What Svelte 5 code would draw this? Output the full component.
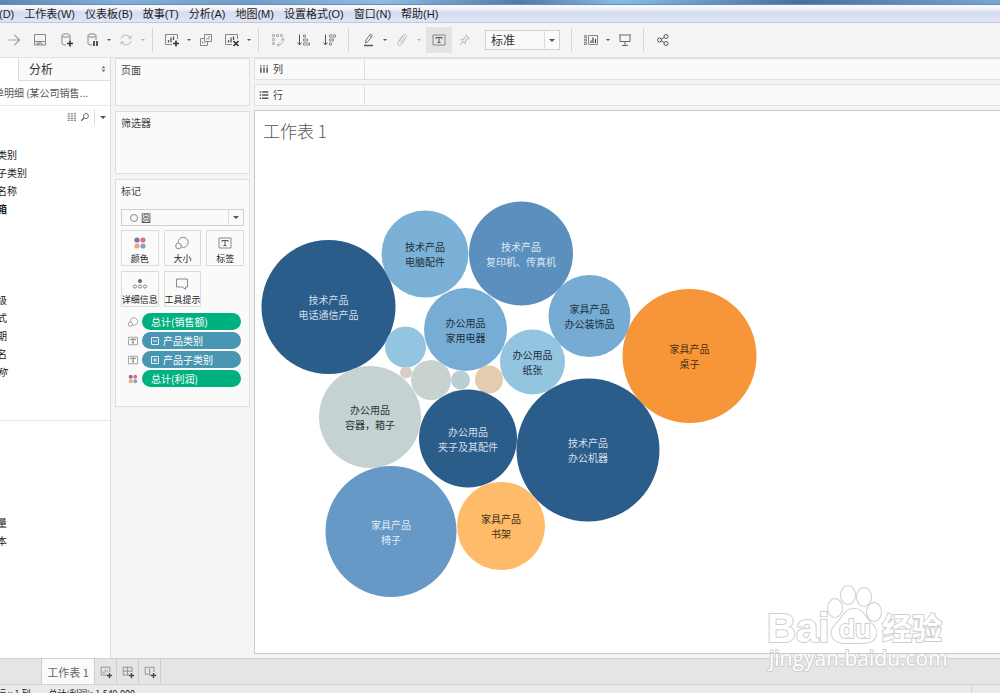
<script lang="ts">
  const menus = [
    '(D)', '工作表(W)', '仪表板(B)', '故事(T)', '分析(A)',
    '地图(M)', '设置格式(O)', '窗口(N)', '帮助(H)'
  ];

  const tools = [
    'forward', 'save', 'data-add', 'data-pause', 'caret', 'refresh', 'caret-dim', 'sep',
    'sheet-add', 'caret', 'duplicate', 'sheet-clear', 'caret', 'sep',
    'swap', 'sort-asc', 'sort-desc', 'sep',
    'pen', 'caret', 'clip', 'caret-dim'
  ];

  const fieldGroups = [
    ['类别', '子类别', '名称', '箱'],
    ['级', '式', '期', '名', '称'],
    ['量', '本']
  ];

  const markButtons = [
    { icon: 'color', label: '颜色' },
    { icon: 'size', label: '大小' },
    { icon: 'text', label: '标签' },
    { icon: 'detail', label: '详细信息' },
    { icon: 'tooltip', label: '工具提示' }
  ];

  const pills = [
    { icon: 'size', label: '总计(销售额)', kind: 'measure', sign: '' },
    { icon: 'text', label: '产品类别', kind: 'dimension', sign: 'minus' },
    { icon: 'text', label: '产品子类别', kind: 'dimension', sign: 'plus' },
    { icon: 'color', label: '总计(利润)', kind: 'measure', sign: '' }
  ];

  const bubbles = [
    { x: 328.5, y: 307, r: 67, fill: '#2b5d8b', ink: '#d3deea', lines: ['技术产品', '电话通信产品'] },
    { x: 425, y: 254, r: 43.5, fill: '#7bb1d7', ink: '#20303c', lines: ['技术产品', '电脑配件'] },
    { x: 521, y: 253.5, r: 52, fill: '#5b8fbe', ink: '#dfe9f3', lines: ['技术产品', '复印机、传真机'] },
    { x: 465.5, y: 329.5, r: 41.5, fill: '#77add5', ink: '#20303c', lines: ['办公用品', '家用电器'] },
    { x: 589.5, y: 316, r: 41, fill: '#76abd3', ink: '#20303c', lines: ['家具产品', '办公装饰品'] },
    { x: 689.5, y: 356, r: 67, fill: '#f79539', ink: '#4a2c10', lines: ['家具产品', '桌子'] },
    { x: 405.5, y: 347, r: 20.5, fill: '#93c4e0', ink: '', lines: [] },
    { x: 406, y: 372.5, r: 6, fill: '#d8cfc4', ink: '', lines: [] },
    { x: 431, y: 380, r: 20, fill: '#c8d2ce', ink: '', lines: [] },
    { x: 460.5, y: 380, r: 9.5, fill: '#bacfd4', ink: '', lines: [] },
    { x: 489, y: 379.5, r: 14, fill: '#e4ccae', ink: '', lines: [] },
    { x: 532.5, y: 362, r: 32.5, fill: '#93c4e0', ink: '#20303c', lines: ['办公用品', '纸张'] },
    { x: 370, y: 417, r: 51, fill: '#c4d2d1', ink: '#2b3434', lines: ['办公用品', '容器，箱子'] },
    { x: 468, y: 438.5, r: 49, fill: '#2b5d8b', ink: '#d3deea', lines: ['办公用品', '夹子及其配件'] },
    { x: 588, y: 450, r: 71.5, fill: '#2b5d8b', ink: '#d3deea', lines: ['技术产品', '办公机器'] },
    { x: 391, y: 531.5, r: 65.5, fill: '#6699c6', ink: '#e2ebf4', lines: ['家具产品', '椅子'] },
    { x: 501, y: 526, r: 44, fill: '#febb69', ink: '#3d2f18', lines: ['家具产品', '书架'] }
  ];

  let size = $state('标准');
  let mark = $state('圆');
</script>

{#snippet icon(name: string)}
  <svg class="icon" viewBox="0 0 16 16" aria-hidden="true">
    {#if name === 'forward'}
      <path d="M2.500 8h11M8.500 3 13.500 8l-5 5" stroke="#a0a0a0" stroke-width="1.200" />
    {:else if name === 'save'}
      <path d="M2.500 2.500h11v10.500h-11zM2.500 9.500h11M5 13v-2h5v2M7 11v2" />
    {:else if name === 'data-add' || name === 'data-pause'}
      <path d="M4 3.500v8c0 1 1.500 1.500 4 1.500M12 3.500V8" />
      <ellipse cx="8" cy="3.500" rx="4" ry="1.700" />
      {#if name === 'data-add'}
        <path d="M12 8.500v6M9 11.500h6" stroke="#333" stroke-width="1.600" />
      {:else}
        <path d="M10 9v5M13 9v5" stroke="#444" stroke-width="1.800" />
      {/if}
    {:else if name === 'refresh'}
      <path d="M3 7a5 5 0 0 1 9.500-1M13 9a5 5 0 0 1-9.500 1M13.500 3.500 12.500 6.500 10 5.500M2.500 12.500 3.500 9.500 6 10.500" stroke="#b8b8b8" />
    {:else if name === 'sheet-add' || name === 'sheet-clear'}
      <path d="M8 12.500H1.500v-10h12V7" />
      <path d="M4.500 10.500V8M7 10.500v-5M9.500 8V4.500" stroke="#555" stroke-width="1.300" />
      {#if name === 'sheet-add'}
        <path d="M12 8.500v6M9 11.500h6" stroke="#333" stroke-width="1.600" />
      {:else}
        <path d="m9.500 9 5 5M14.500 9l-5 5" stroke="#333" stroke-width="1.600" />
      {/if}
    {:else if name === 'duplicate'}
      <path d="M6.500 2.500h7v7h-7zM6.500 6.500h-4v7h7v-4M4.500 11.500V9.500M6.500 11.500v-1M9 7.500V6M11 7.500V4" />
    {:else if name === 'swap'}
      <path d="M2.500 2.500h2v2h-2zM6.500 2.500h2v2h-2zM10.500 2.500h2v2h-2zM2.500 6.500h2v2h-2zM2.500 10.500h2v2h-2zM8 13c3 0 5-2 5-6M11 8.500 13 6l1.500 2.500M9.500 11 7 13l2.500 1.500" stroke="#b0b0b0" />
    {:else if name === 'sort-asc'}
      <path d="M3.500 2.500v10M1.500 10.500l2 2.500 2-2.500" stroke="#555" />
      <path d="M7.500 3h2v2h-2zM7.500 7h4v2h-4zM7.500 11h6v2h-6z" />
    {:else if name === 'sort-desc'}
      <path d="M3.500 2.500v10M1.500 10.500l2 2.500 2-2.500" stroke="#555" />
      <path d="M7.500 3h6v2h-6zM7.500 7h4v2h-4zM7.500 11h2v2h-2z" />
    {:else if name === 'pen'}
      <path d="m5.500 11 .500-3 4.500-6 2 1.500-4.500 6zM9.500 3.500l2 1.500" stroke="#777" />
      <path d="M4 13.500h9" stroke="#555" stroke-width="1.500" />
    {:else if name === 'clip'}
      <path d="m5 9.500 4-6c1.500-2 4.500-.500 3 2l-4.500 7c-2 2.500-5 .500-3.500-2l3.500-5.500c1-1.500 3 0 2 1.500l-3 4.500" stroke="#b8b8b8" />
    {:else if name === 'text'}
      <path d="M2 3h12v10H2z" />
      <path d="M5 7V5.500h6V7M8 5.500v5M6.500 10.500h3" stroke="#555" />
    {:else if name === 'pin'}
      <path d="m8.500 2.500 4 4M9.500 3.500 7 7l-3 .500L8 11.500l.500-3 3.500-2.500M6 9.500 3 13" stroke="#b0b0b0" />
    {:else if name === 'show-me'}
      <path d="M5.500 3.500h9v9h-9zM1.500 3.500h2v2h-2zM1.500 7h2v2h-2zM1.500 10.500h2v2h-2z" />
      <path d="M8 11V8.500M10 11V5.500M12.500 11V7" stroke="#444" stroke-width="1.200" />
    {:else if name === 'present'}
      <path d="M2 3h12M3 3v6.500h10V3M8 9.500v4M5 13.500h6" stroke="#666" />
    {:else if name === 'share'}
      <circle cx="4.500" cy="8" r="2" stroke="#555" />
      <circle cx="11" cy="4.500" r="2" stroke="#555" />
      <circle cx="11" cy="11.500" r="2" stroke="#555" />
      <path d="m6.300 7 3-1.500M6.300 9l3 1.500" stroke="#555" />
    {:else if name === 'color'}
      <g stroke="none">
        <circle cx="5" cy="5" r="2.600" fill="#8a6d9e" />
        <circle cx="11" cy="5" r="2.600" fill="#f3677c" />
        <circle cx="5" cy="11" r="2.600" fill="#f5a574" />
        <circle cx="11" cy="11" r="2.600" fill="#7da5cf" />
      </g>
    {:else if name === 'size'}
      <circle cx="4.500" cy="11" r="2.800" />
      <path d="M4.200 7.500a5 5 0 1 1 3.500 4.600" />
    {:else if name === 'detail'}
      <circle cx="8" cy="5" r="2" fill="#666" stroke="none" />
      <circle cx="3" cy="10.500" r="1.600" />
      <circle cx="8" cy="10.500" r="1.600" />
      <circle cx="13" cy="10.500" r="1.600" />
    {:else if name === 'tooltip'}
      <path d="M2.500 3h11v8h-2v2.500L8.500 11h-6z" />
    {:else if name === 'columns'}
      <path d="M3 2v2M3 5.500V14M8 2v2M8 5.500V14M13 2v2M13 5.500V14" stroke="#555" stroke-width="2.400" />
    {:else if name === 'rows'}
      <path d="M1 3h2.500M5 3h10M1 8h2.500M5 8h10M1 13h2.500M5 13h10" stroke="#555" stroke-width="2.400" />
    {:else if name === 'grid'}
      <path d="M1 3h3.500M6 3h3.500M11 3h3.500M1 6.500h3.500M6 6.500h3.500M11 6.500h3.500M1 10h3.500M6 10h3.500M11 10h3.500M1 13.500h3.500M6 13.500h3.500M11 13.500h3.500" stroke-width="2" />
    {:else if name === 'search'}
      <circle cx="9.500" cy="6.500" r="4" stroke="#666" stroke-width="1.500" />
      <path d="m6.500 9.500-4.500 4.500" stroke="#666" stroke-width="2" />
    {:else if name === 'new-sheet'}
      <path d="M9 11.500H2.500v-9h10V8M5 9.500V7.500M7 9.500V5M9.500 8V6" />
      <path d="M12 9v6M9 12h6" stroke="#444" stroke-width="1.500" />
    {:else if name === 'new-dashboard'}
      <path d="M9 11.500H2.500v-9h10V8M7.500 2.500v9M2.500 7h10" />
      <path d="M12 9v6M9 12h6" stroke="#444" stroke-width="1.500" />
    {:else if name === 'new-story'}
      <path d="M9 11.500H7.500l-1-1h-4v-8h4l1 1 1-1h4V8M7.500 3.500v8" />
      <path d="M12 9v6M9 12h6" stroke="#444" stroke-width="1.500" />
    {/if}
  </svg>
{/snippet}

<div class="app">
  <div class="titlebar"></div>
  <nav class="menubar">
    {#each menus as menu}
      <button>{menu}</button>
    {/each}
  </nav>

  <div class="toolbar">
    {#each tools as tool}
      {#if tool === 'sep'}
        <span class="sep"></span>
      {:else if tool.startsWith('caret')}
        <button class="drop" class:dim={tool === 'caret-dim'} aria-label="more"><i class="caret"></i></button>
      {:else}
        <button class="tool" aria-label={tool}>{@render icon(tool)}</button>
      {/if}
    {/each}
    <button class="tool pressed" aria-label="labels">{@render icon('text')}</button>
    <button class="tool" aria-label="pin">{@render icon('pin')}</button>
    <span class="select fit">
      <select bind:value={size} aria-label="fit">
        <option>标准</option>
      </select>
      <i class="caret"></i>
    </span>
    <span class="sep"></span>
    <button class="tool" aria-label="show me">{@render icon('show-me')}</button>
    <button class="drop" aria-label="more"><i class="caret"></i></button>
    <button class="tool" aria-label="present">{@render icon('present')}</button>
    <span class="sep"></span>
    <button class="tool" aria-label="share">{@render icon('share')}</button>
  </div>

  <main>
    <aside class="data">
      <div class="tabs">
        <button class="analysis">
          分析
          <svg class="spin" viewBox="0 0 6 8" aria-hidden="true"><path d="M3 0 5.500 3h-5zM3 8 .500 5h5z" /></svg>
        </button>
      </div>
      <div class="source">单明细 (某公司销售...</div>
      <div class="fieldTools">
        <button aria-label="view">{@render icon('grid')}</button>
        <button aria-label="find">{@render icon('search')}</button>
        <button class="fieldMenu" aria-label="menu"><i class="caret"></i></button>
      </div>
      {#each fieldGroups as group}
        <ul>
          {#each group as field}
            <li class:bold={field === '箱'} class:italic={field === '称'}>{field}</li>
          {/each}
        </ul>
      {/each}
    </aside>

    <section class="cards">
      <div class="card pages"><h2>页面</h2></div>
      <div class="card filters"><h2>筛选器</h2></div>
      <div class="card marks">
        <h2>标记</h2>
        <span class="select markType">
          <svg class="ring" viewBox="0 0 10 10" aria-hidden="true"><circle cx="5" cy="5" r="3.500" /></svg>
          <select bind:value={mark} aria-label="mark">
            <option>圆</option>
          </select>
          <i class="caret"></i>
        </span>
        <div class="markGrid">
          {#each markButtons as item}
            <button>{@render icon(item.icon)}<span>{item.label}</span></button>
          {/each}
        </div>
        <div class="pills">
          {#each pills as pill}
            <div class="pillRow">
              {@render icon(pill.icon)}
              <button class={pill.kind}>
                {#if pill.sign}
                  <svg class="sign" viewBox="0 0 8 8" aria-hidden="true">
                    <path d={pill.sign === 'plus' ? 'M.5.5h7v7h-7zM2 4h4M4 2v4' : 'M.5.5h7v7h-7zM2 4h4'} />
                  </svg>
                {/if}
                {pill.label}
              </button>
            </div>
          {/each}
        </div>
      </div>
    </section>

    <section class="view">
      <div class="shelf"><div class="shelfName">{@render icon('columns')}列</div></div>
      <div class="shelf"><div class="shelfName">{@render icon('rows')}行</div></div>
      <div class="sheet">
        <h1>工作表 1</h1>
        <svg class="chart" viewBox="255 150 745 503" preserveAspectRatio="xMinYMin meet">
          {#each bubbles as b}
            <circle cx={b.x} cy={b.y} r={b.r} fill={b.fill} />
            {#each b.lines as line, i}
              <text x={b.x} y={b.y - 3 + i * 15} fill={b.ink}>{line}</text>
            {/each}
          {/each}
        </svg>
      </div>
    </section>
  </main>

  <footer class="sheetTabs">
    <button class="current">工作表 1</button>
    <button aria-label="new sheet">{@render icon('new-sheet')}</button>
    <button aria-label="new dashboard">{@render icon('new-dashboard')}</button>
    <button aria-label="new story">{@render icon('new-story')}</button>
  </footer>
  <div class="status">
    <span>行 x 1 列</span>
    <span>总计(利润): 1,549,000</span>
    <i></i>
  </div>

  <svg class="watermark" viewBox="0 0 190 92">
    <g class="outline">
      <text class="brand" x="1" y="57">Bai</text>
      <ellipse cx="69" cy="23" rx="7" ry="9" />
      <ellipse cx="82" cy="10" rx="7" ry="9" />
      <ellipse cx="98" cy="12" rx="7" ry="9" />
      <ellipse cx="108" cy="27" rx="7" ry="9" />
      <path d="M88 24c-9 0-11 8-16 13-6 6-7 9-6 13 2 9 12 8 22 8s20 1 22-8c1-5-1-8-6-13-5-5-7-13-16-13z" />
      <text class="du" x="73" y="53">du</text>
      <text class="cn" x="116" y="54">经验</text>
    </g>
    <text class="site" x="3" y="81">jingyan.baidu.com</text>
  </svg>
</div>

<style>
  :global(body) {
    margin: 0;
  }

  .app {
    position: relative;
    display: flex;
    flex-direction: column;
    height: 100vh;
    overflow: hidden;
    background: #f4f4f4;
    color: #333;
    font-family: 'Noto Sans CJK SC', 'Open Sans', sans-serif;
    font-size: 10px;
    line-height: 18px;
  }

  button,
  select {
    margin: 0;
    padding: 0;
    border: 0;
    background: none;
    color: inherit;
    font: inherit;
  }

  h1,
  h2,
  ul {
    margin: 0;
    padding: 0;
    font-weight: 400;
    list-style: none;
  }

  .icon {
    flex: none;
    width: 16px;
    height: 16px;
    fill: none;
    stroke: #888;
  }

  .caret {
    width: 0;
    border: 3px solid transparent;
    border-top-color: #555;
    border-bottom: 0;
  }

  .titlebar {
    flex: none;
    height: 4px;
    background: linear-gradient(90deg, #5a87b8, #7fb0dc 12%, #6f9dca 25%, #8dbce4 38%, #4f7ba8 52%, #86bbe8 62%, #42719f 80%, #76a8d4);
    border-bottom: 1px solid #7388a3;
  }

  .menubar {
    display: flex;
    flex: none;
    gap: 10px;
    height: 17px;
    margin-left: -1px;
    background: linear-gradient(#fbfcfe, #e6eaf6 35%, #d6dcf0 40%, #dfe4f5);
    border-bottom: 1px solid #c3c8d8;
    color: #1c1c1c;
    font-family: 'Liberation Sans', 'Noto Sans CJK SC', sans-serif;
    font-size: 11px;
  }

  .toolbar {
    display: flex;
    flex: none;
    align-items: center;
    height: 34px;
    padding-left: 1px;
    border-bottom: 1px solid #e2e2e2;
  }

  .tool {
    display: flex;
    align-items: center;
    justify-content: center;
    width: 26px;
    height: 26px;
  }

  .pressed {
    margin-left: 3px;
    background: #e3e3e3;
  }

  .drop {
    display: flex;
    justify-content: center;
    width: 8px;
  }

  .drop .caret {
    border-width: 2px;
    border-bottom: 0;
  }

  .dim {
    opacity: 0.4;
  }

  .sep {
    width: 1px;
    height: 24px;
    margin: 0 6px 0 5px;
    background: #d6d6d6;
  }

  .select {
    display: flex;
    align-items: center;
    box-sizing: border-box;
    border: 1px solid #d0d0d0;
    background: #fafafa;
  }

  .select select {
    flex: 1;
    align-self: stretch;
    appearance: none;
    outline: 0;
    border-right: 1px solid #dcdcdc;
  }

  .select .caret {
    margin: 0 4px;
  }

  .fit {
    width: 75px;
    height: 20px;
    margin: 0 6px 0 7px;
    font-size: 12px;
  }

  .fit select {
    padding-left: 5px;
  }

  main {
    display: flex;
    flex: 1;
    min-height: 0;
  }

  .data {
    flex: none;
    width: 110px;
    overflow: hidden;
    background: #fff;
    border-right: 1px solid #dcdcdc;
  }

  .tabs {
    display: flex;
    padding-left: 18px;
  }

  .analysis {
    display: flex;
    flex: 1;
    align-items: center;
    justify-content: space-between;
    height: 23px;
    padding: 0 4px 0 10px;
    background: #f9f9f9;
    border-left: 1px solid #dcdcdc;
    border-bottom: 1px solid #dcdcdc;
    font-size: 12px;
  }

  .spin {
    width: 5px;
    height: 6px;
    fill: #666;
  }

  .source {
    height: 24px;
    margin-left: -6px;
    border-bottom: 1px solid #e6e6e6;
    color: #555;
    line-height: 24px;
    white-space: nowrap;
  }

  .fieldTools {
    display: flex;
    align-items: center;
    justify-content: flex-end;
    gap: 3px;
    height: 22px;
    margin-bottom: 18px;
  }

  .fieldTools button {
    display: flex;
  }

  .fieldTools .icon {
    width: 10px;
    height: 10px;
  }

  .fieldTools .fieldMenu {
    align-items: center;
    height: 16px;
    margin-left: 1px;
    padding: 0 4px 0 5px;
    border-left: 1px solid #dcdcdc;
  }

  ul {
    margin-left: -3px;
    color: #222;
  }

  ul + ul {
    height: 129px;
    padding-top: 73px;
    border-bottom: 1px solid #e6e6e6;
  }

  ul + ul + ul {
    padding-top: 93px;
    border: 0;
  }

  .bold {
    font-weight: 700;
  }

  .italic {
    font-style: italic;
  }

  .cards {
    display: flex;
    flex: none;
    flex-direction: column;
    gap: 5px;
    width: 135px;
    margin: 0 4px;
  }

  .card {
    box-sizing: border-box;
    padding: 2px 5px;
    background: #fafafa;
    border: 1px solid #dedede;
  }

  h2 {
    color: #444;
    font-size: 10px;
  }

  .pages {
    height: 48px;
  }

  .filters {
    height: 63px;
  }

  .marks {
    height: 228px;
  }

  .markType {
    height: 17px;
    margin: 9px 0 4px;
  }

  .markType select {
    padding-left: 2px;
    line-height: 15px;
  }

  .ring {
    width: 10px;
    height: 10px;
    margin-left: 7px;
    fill: none;
    stroke: #888;
  }

  .markGrid {
    display: grid;
    grid-template-columns: repeat(3, 1fr);
    gap: 5px;
  }

  .markGrid button {
    display: flex;
    flex-direction: column;
    align-items: center;
    box-sizing: border-box;
    min-width: 0;
    height: 36px;
    padding-top: 4px;
    border: 1px solid #dcdcdc;
    color: #222;
    font-size: 9px;
    line-height: 15px;
    white-space: nowrap;
  }

  .pills {
    display: flex;
    flex-direction: column;
    gap: 2px;
    margin-top: 6px;
  }

  .pillRow {
    display: flex;
    align-items: center;
    gap: 3px;
    padding: 0 3px 0 6px;
  }

  .pillRow .icon {
    width: 12px;
    height: 12px;
  }

  .pillRow button {
    display: flex;
    flex: 1;
    align-items: center;
    gap: 4px;
    height: 17px;
    padding: 0 9px;
    border-radius: 9px;
    color: #fff;
    font-size: 10px;
  }

  .pillRow .measure {
    background: #00b180;
  }

  .pillRow .dimension {
    background: #4996b2;
  }

  .sign {
    width: 8px;
    height: 8px;
    fill: none;
    stroke: #e4f0f4;
  }

  .view {
    display: flex;
    flex: 1;
    flex-direction: column;
    gap: 4px;
    min-width: 0;
    padding-bottom: 4px;
  }

  .shelf {
    display: flex;
    flex: none;
    height: 20px;
    background: #fafafa;
    border: 1px solid #dedede;
    border-right: 0;
  }

  .shelfName {
    display: flex;
    align-items: center;
    gap: 4px;
    width: 105px;
    padding-left: 4px;
    border-right: 1px solid #dedede;
    color: #444;
  }

  .shelfName .icon {
    width: 10px;
    height: 10px;
  }

  .sheet {
    display: flex;
    flex: 1;
    flex-direction: column;
    min-height: 0;
    background: #fff;
    border: 1px solid #c8c8c8;
    border-right: 0;
  }

  h1 {
    flex: none;
    height: 39px;
    padding-left: 8px;
    color: #555;
    font-size: 17px;
    font-weight: 300;
    line-height: 39px;
  }

  .chart {
    flex: 1;
    width: 100%;
    min-height: 0;
  }

  .chart text {
    font-size: 10px;
    text-anchor: middle;
  }

  .sheetTabs {
    display: flex;
    flex: none;
    height: 25px;
    padding-left: 41px;
    background: #e5e5e5;
    border-top: 1px solid #d2d2d2;
    border-bottom: 1px solid #d2d2d2;
  }

  .sheetTabs button {
    display: flex;
    align-items: center;
    justify-content: center;
    box-sizing: border-box;
    width: 22px;
    border-right: 1px solid #cfcfcf;
  }

  .sheetTabs .icon {
    width: 14px;
    height: 14px;
  }

  .sheetTabs .current {
    width: 54px;
    background: #fafafa;
    border-left: 1px solid #cfcfcf;
    color: #666;
    font-size: 11px;
  }

  .status {
    display: flex;
    flex: none;
    gap: 18px;
    height: 8px;
    margin-left: -3px;
    overflow: hidden;
    background: #ebebeb;
    color: #222;
    font-size: 9px;
  }

  .status i {
    width: 28px;
    margin-left: auto;
    border-left: 1px solid #cfcfcf;
  }

  .watermark {
    position: absolute;
    right: 44px;
    bottom: 16px;
    width: 190px;
    height: 92px;
    font-family: 'Liberation Sans', sans-serif;
  }

  .outline {
    fill: #fff;
    stroke: #cfcfcf;
    stroke-width: 2px;
    paint-order: stroke;
  }

  .brand {
    font-size: 40px;
    font-weight: 700;
  }

  .du {
    font-size: 26px;
    font-weight: 700;
  }

  .cn {
    font-family: 'Noto Sans CJK SC', sans-serif;
    font-size: 30px;
    font-weight: 700;
  }

  .site {
    fill: #fff;
    stroke: #d0d0d0;
    stroke-width: 2px;
    paint-order: stroke;
    font-family: 'Open Sans', sans-serif;
    font-size: 21px;
  }
</style>
